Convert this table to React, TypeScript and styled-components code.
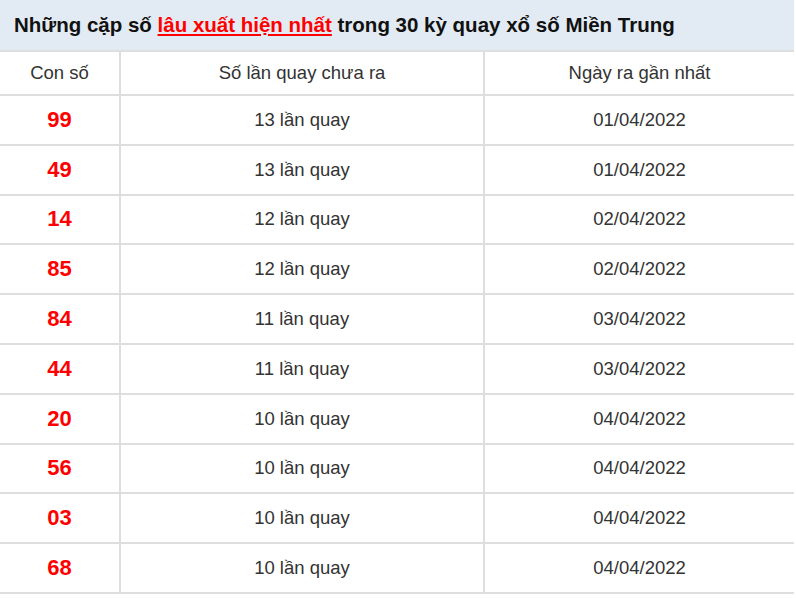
import React from 'react'
import styled, { createGlobalStyle } from 'styled-components'

const GlobalStyle = createGlobalStyle`
  body {
    margin: 0;
    background: #fff;
    font-family: 'Liberation Sans', Arial, sans-serif;
  }
`

const Wrapper = styled.section`
  width: 794px;
`

const Title = styled.h2`
  margin: 0;
  height: 50px;
  display: flex;
  align-items: center;
  padding-left: 14px;
  background: #e2ebf3;
  font-size: 20.5px;
  font-weight: bold;
  color: #111;
`

const Highlight = styled.a`
  color: #ff0000;
  text-decoration: underline;
`

const Table = styled.table`
  width: 100%;
  border-collapse: collapse;
  table-layout: fixed;
`

const Cell = styled.td<{ $head?: boolean }>`
  border: 2px solid #dedede;
  border-left: none;
  border-right: none;
  & + & {
    border-left: 2px solid #dedede;
  }
  height: ${(p) => (p.$head ? '42px' : '47.8px')};
  padding: 0;
  text-align: center;
  font-size: 18.5px;
  color: #333;
`

const Number = styled.span`
  color: #ff0000;
  font-weight: bold;
  font-size: 22px;
`

const rows = [
  { num: '99', count: 13, date: '01/04/2022' },
  { num: '49', count: 13, date: '01/04/2022' },
  { num: '14', count: 12, date: '02/04/2022' },
  { num: '85', count: 12, date: '02/04/2022' },
  { num: '84', count: 11, date: '03/04/2022' },
  { num: '44', count: 11, date: '03/04/2022' },
  { num: '20', count: 10, date: '04/04/2022' },
  { num: '56', count: 10, date: '04/04/2022' },
  { num: '03', count: 10, date: '04/04/2022' },
  { num: '68', count: 10, date: '04/04/2022' }
]

const App: React.FC = () => {
  return (
    <Wrapper>
      <GlobalStyle />
      <Title>
        Những cặp số&nbsp;<Highlight>lâu xuất hiện nhất</Highlight>&nbsp;trong 30 kỳ quay xổ số Miền Trung
      </Title>
      <Table>
        <colgroup>
          <col style={{ width: 120 }} />
          <col style={{ width: 364 }} />
          <col />
        </colgroup>
        <thead>
          <tr>
            <Cell $head>Con số</Cell>
            <Cell $head>Số lần quay chưa ra</Cell>
            <Cell $head>Ngày ra gần nhất</Cell>
          </tr>
        </thead>
        <tbody>
          {rows.map((row, index) => (
            <tr key={index}>
              <Cell>
                <Number>{row.num}</Number>
              </Cell>
              <Cell>{row.count} lần quay</Cell>
              <Cell>{row.date}</Cell>
            </tr>
          ))}
        </tbody>
      </Table>
    </Wrapper>
  )
}

export default App
